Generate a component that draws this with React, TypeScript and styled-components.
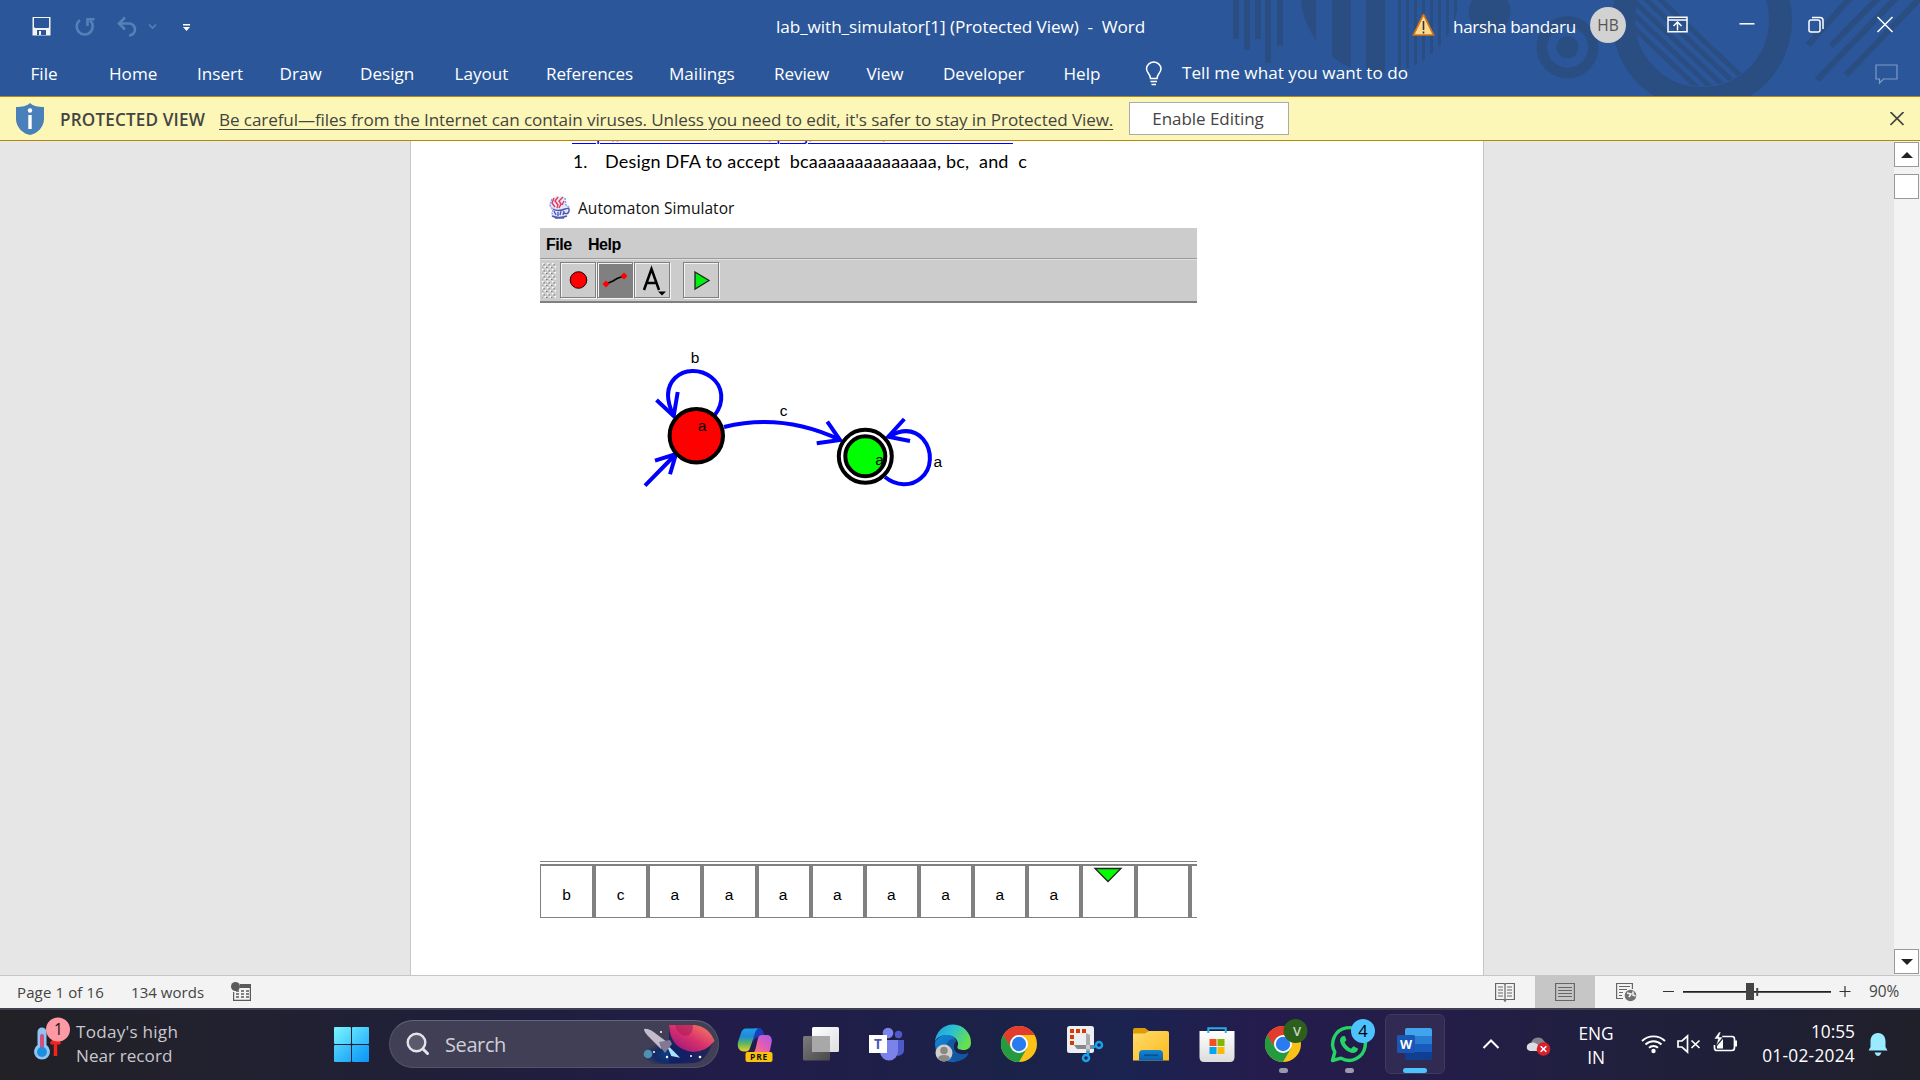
import React from 'react';
import styled, { createGlobalStyle } from 'styled-components';

const Global = createGlobalStyle`
  * { box-sizing: border-box; }
  body { margin: 0; overflow: hidden; background: #e6e6e6; }
  svg { display: block; flex: none; }
`;

const ui = `'Open Sans', 'Noto Sans', sans-serif`;

const Screen = styled.div`
  width: 1920px;
  height: 1080px;
  display: flex;
  flex-direction: column;
  overflow: hidden;
  font-family: ${ui};
`;

const Label = styled.span<{ $size?: number; $ls?: number; $color?: string; $weight?: number; $w?: number }>`
  font-size: ${p => p.$size ?? 17}px;
  letter-spacing: ${p => p.$ls ?? 0}px;
  color: ${p => p.$color ?? 'inherit'};
  font-weight: ${p => p.$weight ?? 400};
  width: ${p => (p.$w ? `${p.$w}px` : 'auto')};
  white-space: pre;
  flex: none;
`;

const Spacer = styled.div<{ $w?: number }>`
  ${p => (p.$w ? `flex: none; width: ${p.$w}px;` : 'flex: 1;')}
`;

/* ---------- header ---------- */
const Header = styled.header`
  position: relative;
  height: 96px;
  flex: none;
  background: #2b579a;
  color: #fff;
`;
const Backdrop = styled.svg`
  position: absolute;
  right: 0;
  top: 0;
`;
const TitleRow = styled.div`
  position: relative;
  display: flex;
  align-items: center;
  height: 53px;
  padding-left: 32px;
`;
const Tabs = styled.nav`
  position: relative;
  display: flex;
  align-items: center;
  height: 40px;
  padding-left: 30.5px;
`;
const TellMe = styled(Label)`
  padding-bottom: 1.5px;
`;
const Avatar = styled.div`
  width: 36px;
  height: 36px;
  border-radius: 50%;
  background: #d2d2d2;
  color: #555;
  font-size: 15.5px;
  display: flex;
  align-items: center;
  justify-content: center;
  margin-top: -3px;
  flex: none;
`;

const TABS: [string, number, number][] = [
  ['File', 78.5, 0], ['Home', 88, 0], ['Insert', 82.5, 0], ['Draw', 80.5, 0], ['Design', 94.5, 0],
  ['Layout', 91.5, 0], ['References', 123, -0.15], ['Mailings', 105, 0], ['Review', 92.5, -0.1],
  ['View', 76.5, -0.1], ['Developer', 120.5, -0.05], ['Help', 81.5, 0],
];

const HeaderArt = () => (
  <Backdrop width="720" height="96" viewBox="1200 0 720 96">
    <defs>
      <clipPath id="disc"><circle cx="1380" cy="-6" r="79" /></clipPath>
      <clipPath id="hole"><circle cx="1702" cy="19" r="67" /></clipPath>
    </defs>
    <g fill="#2a4d82">
      {[[1233, 39], [1244, 50], [1255, 39], [1265, 63], [1277, 46]].map(([x, h]) => (
        <rect key={x} x={x} width="6" height={h} />
      ))}
      <g clipPath="url(#disc)">
        <rect x="1300" width="16" height="90" />
        <rect x="1332" width="19" height="90" />
        <rect x="1366" width="19" height="90" />
        {[1398, 1406, 1414, 1422, 1430, 1438, 1446, 1454].map(x => <rect key={x} x={x} width="3" height="90" />)}
      </g>
      <circle cx="1489.5" cy="12" r="21" />
      <circle cx="1567.5" cy="47.3" r="11" />
    </g>
    <g fill="none" stroke="#2a4d82">
      <circle cx="1567.5" cy="47.3" r="25.7" strokeWidth="10.5" />
      <circle cx="1702" cy="20" r="78.5" strokeWidth="23" />
      <g strokeWidth="5" clipPath="url(#hole)">
        {[1660, 1646, 1632, 1618, 1604].map(x => <path key={x} d={`M${x - 10} -10L${x + 100} 94`} />)}
      </g>
      <g strokeWidth="6">
        <path d="M1808 45L1851 -3M1831 46L1879 -3M1817 80L1897 -3M1846 75L1922 -4" />
      </g>
    </g>
  </Backdrop>
);

/* ---------- protected view bar ---------- */
const Notice = styled.div`
  height: 45px;
  flex: none;
  display: flex;
  align-items: center;
  padding-left: 15px;
  background: #fcf7b6;
  border: solid #b8860b;
  border-width: 1px 0;
  color: #444;
`;
const NoticeTitle = styled(Label)`
  padding-top: 1px;
`;
const NoticeLink = styled(Label)`
  padding-top: 1px;
  text-decoration: underline;
  text-underline-offset: 3px;
  text-decoration-thickness: 1px;
`;
const EnableButton = styled.button`
  width: 160px;
  height: 33px;
  padding: 0 2px 0 0;
  border: 1px solid #ababab;
  background: #fff;
  color: #444;
  font: 17px ${ui};
  letter-spacing: -0.05px;
  flex: none;
  margin-bottom: 1px;
`;

/* ---------- document ---------- */
const Work = styled.main`
  flex: 1;
  min-height: 0;
  display: flex;
  background: #e6e6e6;
`;
const Page = styled.article`
  width: 1074px;
  margin-left: 410px;
  border: solid #c6c6c6;
  border-width: 0 1px;
  background: #fff;
  overflow: hidden;
  display: flex;
  flex-direction: column;
  font-family: Lato, 'Open Sans', sans-serif;
  color: #000;
`;
const LinkLine = styled.div`
  height: 8px;
  padding: 0 0 6.5px 161px;
  flex: none;
  display: flex;
  align-items: flex-end;
  line-height: 18px;
  color: #0000ff;
  text-decoration: underline;
  text-underline-offset: 2px;
  text-decoration-thickness: 1px;
`;
const ListLine = styled.div`
  height: 24px;
  flex: none;
  margin-left: 162px;
  display: flex;
  align-items: center;
`;
const Figure = styled.section`
  width: 657px;
  margin-left: 129px;
  flex: none;
  display: flex;
  flex-direction: column;
`;
const SimTitle = styled.div`
  height: 55px;
  padding: 14px 0 0 9px;
  display: flex;
  align-items: center;
  font-family: ${ui};
`;
const SimMenu = styled.div`
  height: 31px;
  background: #ccc;
  border-bottom: 1px solid #999;
  padding: 3px 0 0 6px;
  display: flex;
  align-items: center;
  font-family: 'Liberation Sans', Arial, sans-serif;
  font-weight: 700;
`;
const SimTools = styled.div`
  height: 44px;
  background: #ccc;
  border-top: 1px solid #e0e0e0;
  border-bottom: 2px solid #808080;
  display: flex;
  padding: 2px 0 0 2px;
`;
const ToolButton = styled.div<{ $on?: boolean }>`
  width: 36px;
  height: 36px;
  margin-right: 1px;
  border: 1px solid #808080;
  box-shadow: inset 1px 1px 0 #f4f4f4, 1px 1px 0 #f4f4f4;
  background: ${p => (p.$on ? '#808080' : '#ccc')};
`;
const Tape = styled.div`
  height: 57px;
  display: flex;
  overflow: hidden;
  border-top: 1px solid #808080;
  padding-top: 2px;
  width: 657px;
`;
const TapeCell = styled.div`
  width: 54.15px;
  height: 54px;
  flex: none;
  border: solid #808080;
  border-width: 2px 2px 1px 1px;
  box-shadow: inset 1px 0 0 #808080;
  &:first-child { box-shadow: none; }
  display: flex;
  justify-content: center;
  font: 15.5px/58px 'Liberation Sans', Arial, sans-serif;
`;

/* ---------- scrollbar ---------- */
const ScrollBar = styled.div`
  width: 26px;
  padding: 1px 1px 1px 0;
  background: #f3f3f3;
  display: flex;
  flex-direction: column;
`;
const ScrollBox = styled.div<{ $gap?: number }>`
  height: 25px;
  margin-bottom: ${p => p.$gap ?? 0}px;
  flex: none;
  border: 1px solid #999;
  background: #fff;
  display: flex;
  align-items: center;
  justify-content: center;
`;

/* ---------- status bar ---------- */
const Status = styled.footer`
  height: 33px;
  flex: none;
  background: #f3f3f3;
  border-top: 1px solid #c6c6c6;
  display: flex;
  align-items: center;
  padding-left: 17px;
  color: #444;
`;
const StatusText = styled(Label)`
  padding-bottom: 1px;
`;
const ViewCell = styled.div<{ $on?: boolean }>`
  width: 60px;
  height: 32px;
  display: flex;
  align-items: center;
  justify-content: center;
  background: ${p => (p.$on ? '#c6c6c6' : 'transparent')};
`;

/* ---------- taskbar ---------- */
const Taskbar = styled.div`
  height: 72px;
  flex: none;
  display: flex;
  border-top: 2px solid #403f50;
  background: linear-gradient(90deg, #212126 0, #222130 240px, #1f1f3b 480px, #221c4a 740px, #1b2248 1000px, #1b2350 1130px, #241c4c 1260px, #231d48 1440px, #20203c 1640px, #1f1f38 1720px, #20202a 1920px);
  color: #fff;
`;
const Weather = styled.div`
  width: 334px;
  padding: 0 0 0 30px;
  display: flex;
`;
const Lines = styled.div<{ $align?: string; $pt?: number; $w?: number }>`
  display: flex;
  flex-direction: column;
  align-items: ${p => p.$align ?? 'flex-start'};
  width: ${p => (p.$w ? `${p.$w}px` : 'auto')};
  line-height: 24px;
  padding-top: ${p => p.$pt ?? 10}px;
  flex: none;
`;
const Start = styled.div`
  width: 35px;
  height: 35px;
  margin: 17px 20px 0 0;
  display: grid;
  grid-template-columns: 17px 17px;
  gap: 1px;
  grid-template-rows: 17px 17px;
`;
const Pane = styled.i<{ $from: string; $to: string }>`
  border-radius: 1px;
  background: linear-gradient(135deg, ${p => p.$from}, ${p => p.$to});
`;
const Search = styled.div`
  width: 330px;
  height: 48px;
  margin: 10px 3px 0 0;
  border-radius: 24px;
  border: 1.5px solid #55536a;
  border-top-color: #66647a;
  background: #413f56;
  display: flex;
  align-items: center;
  padding-left: 16px;
  color: #d0d0d6;
`;
const AppCell = styled.div`
  width: 66px;
  height: 60px;
  margin-top: 4px;
  display: flex;
  flex-direction: column;
  align-items: center;
  padding-top: 10px;
  flex: none;
`;
const ActiveTile = styled.div`
  width: 60px;
  height: 60px;
  margin: 4px 3px 0;
  border: 1px solid #403a5e;
  border-radius: 6px;
  background: #312a52;
  display: flex;
  flex-direction: column;
  align-items: center;
  padding-top: 9px;
  flex: none;
`;
const Running = styled.i<{ $on?: boolean }>`
  width: ${p => (p.$on ? 24 : 9)}px;
  height: 5px;
  flex: none;
  border-radius: 3px;
  margin-top: 2px;
  background: ${p => (p.$on ? '#4cc2ff' : '#9c98ae')};
`;
const Tray = styled.div`
  display: flex;
  padding-left: 34px;
  flex: 1;
`;
const Glyph = styled.div<{ $w: number; $top: number }>`
  width: ${p => p.$w}px;
  padding-top: ${p => p.$top}px;
  flex: none;
`;
const IconFrame = styled.svg`
  margin-top: -2px;
  overflow: visible;
`;

const Icon = ({ children }: { children: React.ReactNode }) => (
  <IconFrame width="46" height="44" viewBox="-5 -4 46 44">{children}</IconFrame>
);

const ChromeArt = () => (
  <>
    <circle cx="18" cy="18" r="18" fill="#fbc116" />
    <path d="M2.400 9A18 18 0 0 0 18 36L25.800 22.500 18 18 10.200 22.500Z" fill="#249a41" />
    <path d="M2.400 9L10.200 22.500 18 9Z" fill="#249a41" />
    <path d="M2.400 9A18 18 0 0 1 33.600 9H18A9 9 0 0 0 10.200 13.500L8 18.700Z" fill="#e33b2e" />
    <circle cx="18" cy="18" r="9" fill="#fff" />
    <circle cx="18" cy="18" r="7.200" fill="#2b7bf0" />
  </>
);

const Copilot = () => (
  <Icon>
    <defs>
      <linearGradient id="cp1" x1="0" y1="0" x2="0" y2="1">
        <stop offset="0" stopColor="#1f9fe8" /><stop offset=".35" stopColor="#1e8bd8" /><stop offset=".65" stopColor="#5fb660" /><stop offset="1" stopColor="#f0d020" />
      </linearGradient>
      <linearGradient id="cp2" x1="1" y1="0" x2="0" y2="1">
        <stop offset="0" stopColor="#a65be8" /><stop offset=".5" stopColor="#e85cb0" /><stop offset="1" stopColor="#ff8a5a" />
      </linearGradient>
    </defs>
    <path d="M17 2H22C25 2 26 5 27 8L28 11H22C18 11 17 14 16 18Z" fill="#1740b8" />
    <path d="M9 2.500H21C18.500 4 17.500 8 16.500 12L13 22C12 25 10 26 7 25.500C2 25.500 0 21 1 16L4 7C5 4 6.500 2.500 9 2.500Z" fill="url(#cp1)" />
    <path d="M25 9H30C34 9 35.500 13 34.500 17L33 24C32 28 30 29 27 29H13C17 28 18 25 19 21L21 12C22 10 23 9 25 9Z" fill="url(#cp2)" />
    <rect x="8.500" y="26" width="27" height="10" rx="2" fill="#fbc10c" />
    <text x="22" y="34" textAnchor="middle" fontFamily={ui} fontWeight="700" fontSize="8.500" fill="#111" letterSpacing=".7">PRE</text>
  </Icon>
);

const TaskView = () => (
  <Icon>
    <defs>
      <linearGradient id="tv1" x1="0" y1="0" x2="1" y2="1"><stop offset="0" stopColor="#7c7c7c" /><stop offset="1" stopColor="#484848" /></linearGradient>
      <linearGradient id="tv2" x1="0" y1="0" x2="1" y2="1"><stop offset="0" stopColor="#fff" /><stop offset="1" stopColor="#dedede" /></linearGradient>
    </defs>
    <rect x="0" y="10" width="27" height="24.500" rx="1.500" fill="url(#tv1)" />
    <rect x="9" y="1" width="27" height="25" rx="1.500" fill="url(#tv2)" />
    <path d="M9 10H27V26H10.500Q9 26 9 24.500Z" fill="#a8a8a8" />
  </Icon>
);

const Teams = () => (
  <Icon>
    <circle cx="29.500" cy="8.500" r="3.700" fill="#5059c9" />
    <path d="M24 14H35V23.500A6 6 0 0 1 24 27Z" fill="#5059c9" />
    <circle cx="19" cy="7" r="5.300" fill="#7b83eb" />
    <path d="M11 14H29V25A9 9 0 0 1 11 26Z" fill="#7b83eb" />
    <rect x="0" y="9" width="18" height="18" fill="#fff" />
    <text x="9" y="22.500" textAnchor="middle" fontFamily={ui} fontSize="13.500" fontWeight="700" fill="#4b53bc">T</text>
  </Icon>
);

const Edge = () => (
  <Icon>
    <defs>
      <linearGradient id="eg1" x1="0" y1="0" x2="1" y2=".4"><stop offset="0" stopColor="#1d9be0" /><stop offset=".5" stopColor="#2cc0d4" /><stop offset="1" stopColor="#66e04e" /></linearGradient>
      <linearGradient id="eg2" x1="0" y1="0" x2="1" y2="1"><stop offset="0" stopColor="#1488dc" /><stop offset="1" stopColor="#104f9e" /></linearGradient>
    </defs>
    <path d="M0 18A18 18 0 0 0 28 33C31 31 33 29 33.500 27C28 30 21 28 19 23C18 20 19 17 21 15C19 9 12 8 7 10C3 11.500 0 15 0 18Z" fill="url(#eg2)" />
    <path d="M0 16A18 18 0 0 1 36 17C36 22 32 24.500 27.500 24C24 23.800 22 22.500 22.500 20.500C25 16 20 9 12 9C6 9 1 12 0 16Z" fill="url(#eg1)" />
    <path d="M12 20C12 28 17 36 25 34.500C30 33 33 29.500 33.200 27C28 30 20 28 18.500 22C18 19 19 16 21 15C18 11 12 14 12 20Z" fill="#12579f" />
    <circle cx="9" cy="27" r="8.500" fill="#d0cfca" />
    <circle cx="9" cy="24.500" r="3.800" fill="#8a8884" />
    <path d="M3 32Q4 29 9 29T15 32Q13 35.500 9 35.500T3 32Z" fill="#8a8884" />
  </Icon>
);

const Snip = () => (
  <Icon>
    <rect x="0" y="0" width="27" height="27" rx="2.500" fill="#eceef2" />
    <g fill="#d83b01">
      {[[3, 3], [9, 3], [15, 3], [3, 9], [3, 15]].map(([x, y]) => <rect key={`${x}-${y}`} x={x} y={y} width="4" height="4" />)}
    </g>
    <path d="M19 7L23 9V27H19Z" fill="#a8aaae" /><path d="M7 19H27V23H10Z" fill="#85888d" />
    <path d="M19 19H23V23H19Z" fill="#c8cacc" />
    <g fill="none" stroke="#1ba1e8" strokeWidth="2.500">
      <circle cx="32" cy="19" r="3" /><circle cx="19" cy="32" r="3" /><path d="M29 20L25 22M21 29V25" />
    </g>
  </Icon>
);

const Explorer = () => (
  <Icon>
    <defs>
      <linearGradient id="fx" x1="0" y1="0" x2="1" y2="1"><stop offset="0" stopColor="#ffda6c" /><stop offset="1" stopColor="#fcbc1c" /></linearGradient>
      <linearGradient id="fb" x1="0" y1="0" x2="0" y2="1"><stop offset="0" stopColor="#1585d2" /><stop offset="1" stopColor="#0862ad" /></linearGradient>
    </defs>
    <path d="M0 4Q0 2 2 2H12L16 5V12H0Z" fill="#dd9b06" />
    <path d="M0 7.500H12L16 5H34Q36 5 36 7V34.500H0Z" fill="url(#fx)" />
    <path d="M6 34.500V28Q6 24 10 24H26Q30 24 30 28V34.500Z" fill="url(#fb)" />
    <rect x="11" y="28.500" width="14" height="1.600" fill="#05508f" />
  </Icon>
);

const Store = () => (
  <Icon>
    <defs><linearGradient id="st" x1="0" y1="0" x2="0" y2="1"><stop offset="0" stopColor="#fff" /><stop offset="1" stopColor="#dcdcdc" /></linearGradient></defs>
    <path d="M9.300 8V2.200H26.700V8" fill="none" stroke="#25aee8" strokeWidth="2" />
    <path d="M.500 5H35.500V31Q35.500 36 31 36H5Q.500 36 .500 31Z" fill="url(#st)" />
    <path d="M9.300 5V7M26.700 5V7" stroke="#25aee8" strokeWidth="2" />
    <rect x="10.500" y="13" width="7" height="7" fill="#f25022" /><rect x="18.500" y="13" width="7" height="7" fill="#7fba00" />
    <rect x="10.500" y="21" width="7" height="7" fill="#00a4ef" /><rect x="18.500" y="21" width="7" height="7" fill="#ffb900" />
  </Icon>
);

const ChromeWork = () => (
  <Icon>
    <ChromeArt />
    <circle cx="30.500" cy="5" r="12" fill="#2c5f1c" />
    <text x="32" y="10" textAnchor="middle" fontFamily={ui} fontSize="13" fontWeight="600" fill="#c9d8c0">V</text>
  </Icon>
);

const WhatsApp = () => (
  <Icon>
    <path d="M1.500 34.500L3.800 26A16.300 16.300 0 1 1 10 32.200Z" fill="none" stroke="#25d366" strokeWidth="3.400" strokeLinejoin="round" />
    <path d="M12 10C10 10.500 9 12.500 9 14.500C9.500 20 16 27 22.500 27C25 26.800 27 25 27 22.500L22.500 20.300 20 22.800C17 21.500 14.800 19 13.600 16.300L15.500 14 13.800 10Z" fill="#25d366" />
    <circle cx="32" cy="5" r="12" fill="#4cc2ff" />
    <text x="32" y="11" textAnchor="middle" fontFamily={ui} fontSize="16.500" fill="#000">4</text>
  </Icon>
);

const WordArt = () => (
  <Icon>
    <path d="M8 4Q8 2 10 2H33Q35 2 35 4V10H8Z" fill="#41a5ee" />
    <path d="M8 10H35V18H8Z" fill="#2b7cd3" />
    <path d="M8 18H35V26H8Z" fill="#185abd" />
    <path d="M8 26H35V32Q35 34 33 34H10Q8 34 8 32Z" fill="#103f91" />
    <rect x="0" y="9" width="18" height="18" rx="1.500" fill="#1a56b6" />
    <text x="9" y="22.600" textAnchor="middle" fontFamily={ui} fontSize="12.500" fontWeight="700" fill="#fff">W</text>
  </Icon>
);

const JavaCup = () => (
  <svg width="22" height="24" viewBox="0 0 22 24">
    <path d="M2 3L7 0 16 1 17 9 21 11 21 16 17 21 7 23 2 20 3 15 0 10Z" fill="#e3e8fc" />
    <g fill="none" strokeWidth="1.400">
      <path d="M5 2L3 7 6 11M9 1L6 5 9 9 8 12M14 1L10 5 12 8 10 12M15 5L13 9" stroke="#e63950" />
      <path d="M4 13Q9 16 16 13M16 13Q21 11 20 15T15 17M5 15L7 19M9 16V20M12 15L11 19M15 15L14 19M3 20Q10 23 18 20M6 22H15" stroke="#5058b0" />
      <path d="M3 3L1 9 4 14 3 18M16 2L17 9 21 12" stroke="#8c9cec" strokeDasharray="2 1" />
    </g>
  </svg>
);

const Automaton = () => (
  <svg width="657" height="558" viewBox="540 303 657 558">
    <g fill="none" stroke="#0000ff" strokeWidth="4">
      <path d="M714.500 415.500C725 402 723 386 711 377C700 368.500 684 369 675 378C666 387 666 400 673.700 416" />
      <path d="M656.500 400L673.700 416 677.700 392" />
      <path d="M724 427C757 419 797 419.500 840 440M827.300 421.700L840 440 816.700 443.300" />
      <path d="M645 485.700L676 454M655 460.700L676 454 670 474.300" />
      <path d="M885 477C896 486 911 487 921 478C932 469 933 451 923 439C914 429 902 429 888.300 436.700" />
      <path d="M904.300 419L888.300 436.700 910 441" />
    </g>
    <g stroke="#000" strokeWidth="4">
      <circle cx="696.300" cy="435.700" r="26.700" fill="#ff0000" />
      <circle cx="865.300" cy="456.300" r="26.500" fill="#fff" />
      <circle cx="865.300" cy="456.300" r="20" fill="#00ff00" />
    </g>
    <g fontFamily="'Liberation Sans', Arial, sans-serif" fontSize="15.500" textAnchor="middle">
      <text x="695" y="363">b</text>
      <text x="783.500" y="416">c</text>
      <text x="702" y="431">a</text>
      <text x="879.500" y="464.500">a</text>
      <text x="937.700" y="467">a</text>
    </g>
  </svg>
);

const TAPE = ['b', 'c', 'a', 'a', 'a', 'a', 'a', 'a', 'a', 'a', '▼', '', ''];

export default function App() {
  return (
    <Screen>
      <Global />
      <Header>
        <HeaderArt />
        <TitleRow>
          <svg width="130" height="24" viewBox="32 13 130 24" fill="none">
            <path d="M32.500 15H50.500V33.500H32.500Z" fill="#f4f4f4" />
            <path d="M34 16H49V25.500L48 26H35L34 25Z" fill="#2b579a" />
            <path d="M37 28H46V33H37Z" fill="#2b579a" /><path d="M39 29H41V33H39Z" fill="#f4f4f4" />
            <g stroke="#5580b8" strokeWidth="2.600">
              <path d="M80 18A8 8 0 1 0 90 18.500M94.500 17.300H87.500V24" />
              <path d="M119 21.500H129A6 6 0 0 1 129 33.500M125 15.500L119 21.500 125 27.500" />
              <path d="M149 22.500L152.500 26 156 22.500" strokeWidth="1.700" />
            </g>
          </svg>
          <Spacer $w={19} />
          <svg width="12" height="24" viewBox="0 13 12 24" fill="#fff">
            <path d="M2 22H9V23.500H2ZM2 25H9L5.500 29Z" />
          </svg>
          <Spacer $w={583} />
          <Label $w={635} $size={17.2} $ls={-0.08}>lab_with_simulator[1] (Protected View)  -  Word</Label>
          <svg width="24" height="26" viewBox="0 1 24 26">
            <path d="M12.500 1.500L22.500 22H2.500Z" fill="#fbd990" stroke="#d9730d" strokeWidth="1.700" />
            <path d="M12.500 8V17M12.500 18.500V20.500" stroke="#333" strokeWidth="1.600" />
          </svg>
          <Spacer $w={18} />
          <Label $w={137} $size={17.1} $ls={-0.33}>harsha bandaru</Label>
          <Avatar>HB</Avatar>
          <svg width="270" height="30" viewBox="1626 10.500 270 30" fill="none" stroke="#fff" strokeWidth="1.500">
            <path d="M1668 15.700H1687V30.300H1668ZM1668 18.500H1687M1677.500 29V20.500M1673.500 24.500L1677.500 20.500 1681.500 24.500" />
            <path d="M1739.500 22.300H1754.500" />
            <rect x="1809" y="18.500" width="11" height="12" rx="2" />
            <path d="M1812 16H1820Q1823 16 1823 19V27.500" />
            <path d="M1877.500 15.500L1892.500 30.500M1892.500 15.500L1877.500 30.500" />
          </svg>
        </TitleRow>
        <Tabs>
          {TABS.map(([t, w, ls]) => <Label key={t} $w={w} $size={17.1} $ls={ls}>{t}</Label>)}
          <svg width="18" height="26" viewBox="0 0 18 26" fill="none" stroke="#fff" strokeWidth="1.500">
            <path d="M5.500 18.500C5.500 14 1.500 13 1.500 8.500A7.300 7.300 0 0 1 16 8.500C16 13 12 14 12 18.500ZM5.500 21.500H12M6.500 24.500H11" />
          </svg>
          <Spacer $w={19} />
          <TellMe $w={693} $size={17.1} $ls={0.05}>Tell me what you want to do</TellMe>
          <svg width="24" height="24" viewBox="0.500 0.500 24 24" fill="none" stroke="#7f9bc6" strokeWidth="1.200">
            <path d="M1.500 4.500H22.500V18.500H9L5 22.500V18.500H1.500Z" />
          </svg>
        </Tabs>
      </Header>

      <Notice>
        <svg width="30" height="34" viewBox="0 0 30 34">
          <path d="M15 1C18 4 23 5 29 5V17C29 25 22 32 15 33C8 32 1 25 1 17V5C7 5 12 4 15 1Z" fill="#4a80ba" />
          <circle cx="15" cy="8.500" r="2.200" fill="#fff" /><path d="M15 13V27" stroke="#fff" strokeWidth="3.400" />
        </svg>
        <Spacer $w={15} />
        <NoticeTitle $w={159} $size={17.1} $weight={600} $ls={0.17}>PROTECTED VIEW</NoticeTitle>
        <NoticeLink $w={910} $size={17.1} $ls={-0.095}>Be careful—files from the Internet can contain viruses. Unless you need to edit, it's safer to stay in Protected View.</NoticeLink>
        <EnableButton>Enable Editing</EnableButton>
        <Spacer $w={601} />
        <svg width="14" height="14" viewBox="0 0.500 14 14" stroke="#444" strokeWidth="1.700"><path d="M.500 .500L13.500 13.500M13.500 .500L.500 13.500" /></svg>
      </Notice>

      <Work>
        <Page>
          <LinkLine><Label $size={18} $ls={0.43}>http://www.cburch.com/proj/autosim/download.html</Label></LinkLine>
          <ListLine>
            <Label $w={32} $size={17.5}>1.</Label>
            <Label $size={18} $ls={0.2}>Design DFA to accept  bcaaaaaaaaaaaaaa, bc,  and  c</Label>
          </ListLine>
          <Figure>
            <SimTitle>
              <JavaCup />
              <Spacer $w={7} />
              <Label $size={15.5} $ls={0.05} $color="#111">Automaton Simulator</Label>
            </SimTitle>
            <SimMenu><Label $w={42} $size={16} $weight={700} $ls={-0.5}>File</Label><Label $size={16} $weight={700} $ls={-0.5}>Help</Label></SimMenu>
            <SimTools>
              <svg width="18" height="38">
                <defs>
                  <pattern id="grip" width="5" height="6" patternUnits="userSpaceOnUse">
                    <path d="M0 1h1.500v1.500h-1.500zM2.500 4h1.500v1.500h-1.500z" fill="#fff" /><path d="M1.500 2.200h1.300v1.300h-1.300zM4 5h1v1h-1zM0 5h.500v1h-.500z" fill="#777" />
                  </pattern>
                </defs>
                <rect width="14" height="37" fill="url(#grip)" />
              </svg>
              <ToolButton><svg width="34" height="34"><circle cx="17.500" cy="17" r="8.300" fill="#f00" stroke="#200" /></svg></ToolButton>
              <ToolButton $on><svg width="34" height="34"><path d="M8 21L15 18 19 15.500 26 13" stroke="#000" strokeWidth="1.600" fill="none" /><path d="M8 17.500L11.500 21 8 24.500 4.500 21ZM26 9.500L29.500 13 26 16.500 22.500 13Z" fill="#f00" /></svg></ToolButton>
              <ToolButton><svg width="34" height="34"><path d="M9 27L16.500 6 24 27M12 20H21.500" stroke="#000" strokeWidth="2.500" fill="none" /><path d="M23 28.500H31L27 32.500Z" /></svg></ToolButton>
              <Spacer $w={12} />
              <ToolButton><svg width="34" height="34"><path d="M11 9L25 17.500 11 26Z" fill="#00f010" stroke="#222" strokeWidth="1.300" /></svg></ToolButton>
            </SimTools>
            <Automaton />
            <Tape>
              {TAPE.map((c, i) => (
                <TapeCell key={i}>
                  {c === '▼'
                    ? <svg width="30" height="20"><path d="M2 2.500H28L15 15.500Z" fill="#0f0" stroke="#222" strokeWidth="1.300" /></svg>
                    : c}
                </TapeCell>
              ))}
            </Tape>
          </Figure>
        </Page>
        <Spacer />
        <ScrollBar>
          <ScrollBox $gap={7}><svg width="12" height="6"><path d="M0 6L6 0 12 6Z" fill="#222" /></svg></ScrollBox>
          <ScrollBox />
          <Spacer />
          <ScrollBox><svg width="12" height="6"><path d="M0 0L6 6 12 0Z" fill="#222" /></svg></ScrollBox>
        </ScrollBar>
      </Work>

      <Status>
        <StatusText $w={114} $size={15} $ls={0.13}>Page 1 of 16</StatusText>
        <StatusText $w={100} $size={15} $ls={0.05}>134 words</StatusText>
        <svg width="21" height="20" viewBox="0 0 21 20" fill="#5a5a5a">
          <path d="M9 2H20V6H9Z" /><circle cx="4.500" cy="4.500" r="4.500" />
          <path d="M2.600 10V18.400H19.400V5" fill="none" stroke="#5a5a5a" strokeWidth="1.200" />
          <path d="M5 9H8M10 9H13M15 9H18M5 12H8M10 12H13M15 12H18M5 15H8M10 15H13M15 15H18" stroke="#5a5a5a" strokeWidth="1.300" />
        </svg>
        <Spacer />
        <ViewCell>
          <svg width="20" height="20" fill="none" stroke="#666" strokeWidth="1.200">
            <path d="M.600 1.500H9L10 2.500 11 1.500H19.400V17.500H11.500L10 18.500 8.500 17.500H.600ZM10 2V20M3 5H8M3 8H8M3 11H8M3 14H8M12 5H17M12 8H17M12 11H17M12 14H17" />
          </svg>
        </ViewCell>
        <ViewCell $on>
          <svg width="20" height="20" fill="none" stroke="#666" strokeWidth="1.200">
            <path d="M.600 1.500H19.400V18.500H.600ZM3 5.500H17M3 8.500H17M3 11.500H17M3 14.500H17" />
          </svg>
        </ViewCell>
        <ViewCell>
          <svg width="20" height="20" overflow="visible" fill="none" stroke="#666" strokeWidth="1.200">
            <path d="M8 16.500H1.600V1.500H17.400V7M4 4.500H15M4 7.500H12M4 10.500H8M4 13.500H7" />
            <circle cx="15.500" cy="13.500" r="5.800" fill="#707070" stroke="none" /><path d="M12 11L16 12 14 15M18 9.500L18 13 20.500 14" stroke="#f3f3f3" strokeWidth="1.600" />
          </svg>
        </ViewCell>
        <svg width="200" height="20" viewBox="1655 982 200 20">
          <path d="M1663 991.500H1674M1839.500 991.500H1850.500M1845 986V997" stroke="#333" strokeWidth="1.200" />
          <path d="M1683 991.900H1831" stroke="#222" strokeWidth="1.800" />
          <path d="M1746 983H1754V1000H1746ZM1756.300 988H1758.200V996H1756.300Z" fill="#444" />
        </svg>
        <Spacer $w={14} />
        <StatusText $w={51} $size={15.4} $ls={0}>90%</StatusText>
      </Status>

      <Taskbar>
        <Weather>
          <svg width="46" height="60" viewBox="30 1010 46 60">
            <path d="M37.500 1032A4.500 4.500 0 0 1 46.500 1032V1045A8 8 0 1 1 37.500 1045Z" fill="#8fc4f5" />
            <rect x="40" y="1034" width="4" height="16" rx="2" fill="#d4507c" />
            <circle cx="42" cy="1052" r="5" fill="#1c90dc" />
            <path d="M55.500 1056V1042M51 1044L55.500 1039 60 1044" stroke="#f5221e" strokeWidth="3.500" fill="none" />
            <circle cx="58" cy="1029.500" r="12" fill="#ff99a4" />
            <text x="58.500" y="1035" fontSize="15.500" textAnchor="middle" fontFamily={ui} fill="#111">1</text>
          </svg>
          <Lines>
            <Label $size={17.1} $color="#c9c8cd" $ls={0.25}>Today's high</Label>
            <Label $size={17.1} $color="#c9c8cd" $ls={0.05}>Near record</Label>
          </Lines>
        </Weather>
        <Start>
          <Pane $from="#7df4ff" $to="#43cdfb" /><Pane $from="#5fe0ff" $to="#2cb5fa" />
          <Pane $from="#4fd2fd" $to="#1fa8f8" /><Pane $from="#30bcfb" $to="#0c94f6" />
        </Start>
        <Search>
          <svg width="24" height="24" fill="none" stroke="#e4e3e8" strokeWidth="2.400" strokeLinecap="round"><circle cx="10.500" cy="10.500" r="8.800" fill="#5b596c" /><path d="M17 17L21.500 21.500" strokeWidth="3" /></svg>
          <Spacer $w={15} />
          <Label $w={198} $size={20} $ls={-0.4}>Search</Label>
          <svg width="74" height="40" viewBox="0 0 74 40">
            <defs>
              <radialGradient id="sky"><stop offset="0" stopColor="#06468a" /><stop offset=".6" stopColor="#152a66" /><stop offset="1" stopColor="#152a66" stopOpacity="0" /></radialGradient>
              <linearGradient id="planet" x1="1" y1="0" x2="0" y2="1"><stop offset="0" stopColor="#f88a5c" /><stop offset=".5" stopColor="#d8306c" /><stop offset="1" stopColor="#8c1080" /></linearGradient>
            </defs>
            <ellipse cx="28" cy="31" rx="28" ry="13" fill="url(#sky)" />
            <path d="M26 1H50Q64 4 70 18Q62 39 50 39H26Z" fill="#141c60" opacity=".75" />
            <path d="M26 1H52Q66 3 71.500 17Q63 28 50 28Q27 25 26 1Z" fill="url(#planet)" />
            <path d="M32 1H50Q50 12 42 12Q34 10 32 1Z" fill="#b01c5c" opacity=".65" />
            <path d="M1 5Q5 4 12 9L24 18 18 25 6 13Q1 8 1 5Z" fill="#c4bccd" />
            <path d="M16 18L27 16 29 20 22 29 18 24Z" fill="#817994" />
            <path d="M26 24L34 32 29 31Z" fill="#a8e4ff" stroke="#a8e4ff" strokeWidth="2" />
            <circle cx="5" cy="30" r="4.300" fill="#4d92b4" />
            <g fill="#fff"><circle cx="24" cy="33" r="1.200" /><circle cx="48" cy="32" r="1" /><circle cx="57" cy="33" r="1.300" /><circle cx="18" cy="8" r="1" /><circle cx="11" cy="28" r="1" /></g>
          </svg>
        </Search>
        <AppCell><Copilot /></AppCell>
        <AppCell><TaskView /></AppCell>
        <AppCell><Teams /></AppCell>
        <AppCell><Edge /></AppCell>
        <AppCell><Icon><ChromeArt /></Icon></AppCell>
        <AppCell><Snip /></AppCell>
        <AppCell><Explorer /></AppCell>
        <AppCell><Store /></AppCell>
        <AppCell><ChromeWork /><Running /></AppCell>
        <AppCell><WhatsApp /><Running /></AppCell>
        <ActiveTile><WordArt /><Running $on /></ActiveTile>
        <Tray>
          <Glyph $w={44} $top={28}><svg width="18" height="12" fill="none" stroke="#fff" strokeWidth="2"><path d="M1.500 10L9 2.500 16.500 10" /></svg></Glyph>
          <Glyph $w={51} $top={25}>
            <svg width="26" height="22">
              <path d="M5 9A7 7 0 0 1 18 6Q21 8 21 11L8 10Z" fill="#85838f" /><path d="M4 16Q0 15 1 10.500Q3 7 8 7.500L15 11V16Z" fill="#dddce4" />
              <circle cx="17.500" cy="14" r="6.800" fill="#d8202c" /><path d="M14.700 11.200L20.300 16.800M20.300 11.200L14.700 16.800" stroke="#fff" strokeWidth="1.600" />
            </svg>
          </Glyph>
          <Lines $align="center" $pt={12} $w={38}>
            <Label $size={17.3} $ls={-0.1}>ENG</Label>
            <Label $size={17.3} $ls={-0.1}>IN</Label>
          </Lines>
          <Spacer $w={26} />
          <Glyph $w={36} $top={24}>
            <svg width="25" height="20" fill="none" stroke="#fff" strokeWidth="1.900"><path d="M1 7A16.500 16.500 0 0 1 24 7M4.500 10.500A11.500 11.500 0 0 1 20.500 10.500M8 13.800A6.500 6.500 0 0 1 17 13.800" /><circle cx="12.500" cy="17" r="2.200" fill="#fff" stroke="none" /></svg>
          </Glyph>
          <Glyph $w={36} $top={24}>
            <svg width="24" height="20" fill="none" stroke="#fff" strokeWidth="1.700"><path d="M1 7H5L10.500 2V18L5 13H1ZM14.500 6.500L22.500 14M22.500 6.500L14.500 14" /></svg>
          </Glyph>
          <Glyph $w={26} $top={21}>
            <svg width="26" height="23" fill="none" stroke="#fff" strokeWidth="1.700"><path d="M9 5.500H19Q21.500 5.500 21.500 8V16.500Q21.500 19.500 19 19.500H4Q1.500 19.500 1.500 17V14" /><path d="M21.500 9.500H24V15.500H21.500Z" fill="#fff" stroke="none" /><path d="M10 8V17.500H4V15Z" fill="#fff" stroke="none" /><path d="M6 1L1 8H5L3 15 10 6H6L8 1Z" fill="#fff" stroke="#20203c" strokeWidth=".6" /></svg>
          </Glyph>
          <Spacer />
          <Lines $align="flex-end">
            <Label $size={17.3} $ls={0}>10:55</Label>
            <Label $size={17.3} $ls={0.27}>01-02-2024</Label>
          </Lines>
          <Spacer $w={13} />
          <Glyph $w={52} $top={22}>
            <svg width="20" height="25"><path d="M10 1C5 1 2.500 5 2.500 9.500V15L.500 18.500H19.500L17.500 15V9.500C17.500 5 15 1 10 1ZM6.500 20.500H13.500Q12 24 10 24T6.500 20.500Z" fill="#99ebff" /></svg>
          </Glyph>
        </Tray>
      </Taskbar>
    </Screen>
  );
}
